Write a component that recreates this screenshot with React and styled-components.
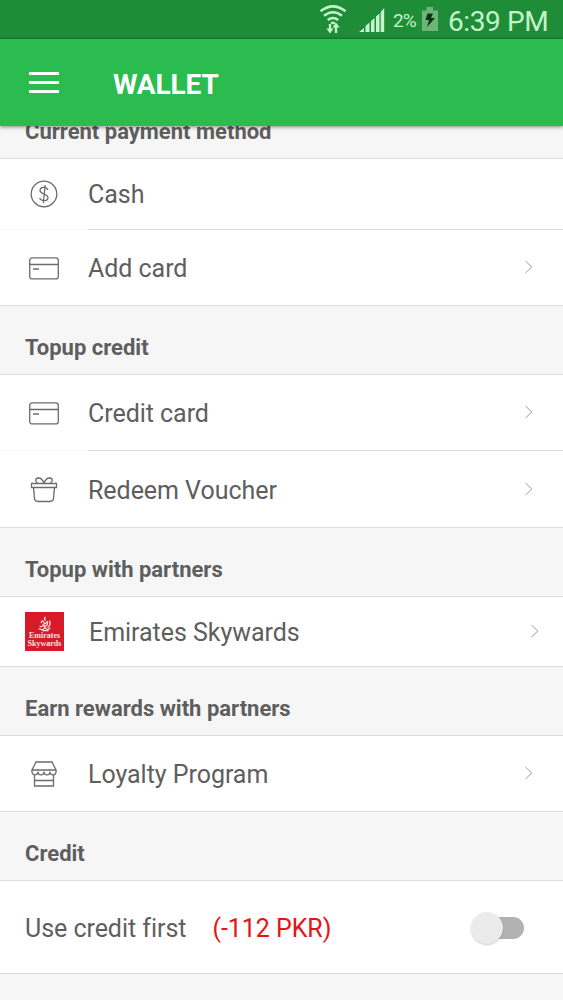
import React from "react";
import styled, { createGlobalStyle } from "styled-components";

const App = () => {
  return (
    <>
      <GlobalStyle />
      <Screen>
        <StatusBar>
          <WifiIcon />
          <SignalIcon />
          <Percent>2%</Percent>
          <BatteryIcon />
          <Clock>6:39 PM</Clock>
        </StatusBar>
        <AppBar>
          <MenuButton aria-label="Menu">
            <span />
            <span />
            <span />
          </MenuButton>
          <Title>WALLET</Title>
        </AppBar>
        <Content>
          <SectionTitle $scrolled>Current payment method</SectionTitle>
          <Item height={71} icon={<CashIcon />} label="Cash" inset />
          <Item height={76} icon={<CardIcon />} label="Add card" arrow />

          <SectionTitle>Topup credit</SectionTitle>
          <Item height={76} icon={<CardIcon />} label="Credit card" arrow inset />
          <Item height={77} icon={<GiftIcon />} label="Redeem Voucher" arrow />

          <SectionTitle>Topup with partners</SectionTitle>
          <Item height={70} icon={<EmiratesLogo />} label="Emirates Skywards" arrow partner />

          <SectionTitle>Earn rewards with partners</SectionTitle>
          <Item height={76} icon={<StoreIcon />} label="Loyalty Program" arrow />

          <SectionTitle>Credit</SectionTitle>
          <CreditRow>
            <Text>Use credit first</Text>
            <Amount>(-112 PKR)</Amount>
            <Switch role="switch" aria-checked="false">
              <Thumb />
            </Switch>
          </CreditRow>
        </Content>
      </Screen>
    </>
  );
};

const Item = ({ height, icon, label, arrow, inset, partner }) => (
  <Row $height={height} $inset={inset}>
    <IconBox $partner={partner} $raised={partner || !arrow}>
      {icon}
    </IconBox>
    <Text $raised={!arrow}>{label}</Text>
    {arrow && (
      <Arrow $partner={partner} viewBox="0 0 10 16">
        <path d="M1.500 2 7.800 8l-6.300 6" />
      </Arrow>
    )}
  </Row>
);

const WifiIcon = () => (
  <svg width="28" height="30" viewBox="0 0 28 30" fill="none" stroke="#c5f3ca" strokeWidth="2.500">
    <path d="M1.500 6.300Q14-3.500 26.500 6.300M5 10.700q9-7 18 0M8.700 15q5.300-4 10.600 0" />
    <path d="M11 19v7M17 28v-7" strokeWidth="2.300" />
    <path d="M7.300 23.500h7.200L11 28.500zM13.500 22.500h7.200L17 17.500z" fill="#c5f3ca" stroke="none" />
    <path d="M11 18q3-3 6 0l-3 1.500z" fill="#c5f3ca" stroke="none" />
  </svg>
);

const SignalIcon = () => (
  <svg width="26" height="26" viewBox="0 0 26 26" fill="#c5f3ca">
    <path d="M0 25 5 21v4zM6.500 19l4-3.500V25h-4zM12 14l3.500-3v14H12zM17 9.500l3.500-3V25H17zM21.700 5l3.500-4v24h-3.500z" />
  </svg>
);

const BatteryIcon = () => (
  <svg width="16" height="25" viewBox="0 0 16 25">
    <path d="M0 3.500h4.500V0h6.500v3.500h5V24H0z" fill="#6db677" />
    <path d="M5.500 6.500H11l-2 4.500h4L5 20l2-7H3.500z" fill="#083510" />
  </svg>
);

const CashIcon = () => (
  <LineIcon width="28" height="28" viewBox="0 0 28 28">
    <circle cx="14" cy="14" r="12.800" />
    <path d="M18 10C16.500 6.500 10 6.500 10 10.500c0 4 8 3 8 7 0 4-6.500 4-8.500.5M15.200 5l-1.900 18" />
  </LineIcon>
);

const CardIcon = () => (
  <LineIcon width="30" height="23" viewBox="0 0 30 23">
    <rect x=".7" y=".9" width="28.600" height="21" rx="2.500" />
    <path d="M1 7.500h28M4 12h6" />
  </LineIcon>
);

const GiftIcon = () => (
  <LineIcon width="28" height="26" viewBox="0 0 28 26">
    <path d="M1.500 6.500h25v4h-25zM3.500 10.500l1 11q.3 3 3.500 3h12q3.200 0 3.500-3l1-11" />
    <path d="M14 6.500C12.500 2 10 .8 8 1 5 1.300 5 5 8 6.500M14 6.500C15.500 2 18 .8 20 1c3 .3 3 4 0 5.500" />
  </LineIcon>
);

const StoreIcon = () => (
  <LineIcon width="26" height="26" viewBox="0 0 26 26">
    <path d="M5 1h16l4 8H1zM1 9v1.500c0 4.500 6 4.500 6 0 0 4.500 6 4.500 6 0 0 4.500 6 4.500 6 0 0 4.500 6 4.500 6 0V9M3.500 13.500V25h19V13.500M3.500 19.500h19" />
  </LineIcon>
);

const EmiratesLogo = () => (
  <Logo>
    <svg width="16" height="16" viewBox="0 0 16 18" fill="none" stroke="#fbdadd" strokeWidth="1.400">
      <path d="M8.500 1q-2 2 0 4M3.500 8q1.500-5 3-1t4-1.500M2 11q2 3 4-1.500M7 7v5q4 0 4-6M13 5q2 5-2 8M1 14q5 3 7-1 2 4 6 .5M5 16.500h7" />
    </svg>
    <b>Emirates</b>
    <b>Skywards</b>
  </Logo>
);

const GlobalStyle = createGlobalStyle`
  * {
    box-sizing: border-box;
  }
  body {
    margin: 0;
    font-family: Roboto, sans-serif;
    color: #5e5e5e;
  }
`;

const Screen = styled.div`
  width: 563px;
  height: 1000px;
  display: flex;
  flex-direction: column;
  overflow: hidden;
  background: #f6f6f6;
`;

const StatusBar = styled.div`
  height: 39px;
  flex: none;
  display: flex;
  align-items: flex-start;
  padding: 5px 0 0 319px;
  background: #1f8d38;
  border-bottom: 1px solid #1b7e31;
  color: #c5f3ca;

  svg {
    flex: none;
  }
  svg:nth-of-type(2) {
    margin: 2px 0 0 12px;
  }
  svg:nth-of-type(3) {
    margin: 2px 0 0 4px;
  }
`;

const Percent = styled.span`
  width: 25px;
  margin: 4px 0 0 8px;
  font-size: 19px;
  line-height: 24px;
  letter-spacing: -1px;
`;

const Clock = styled.span`
  margin-left: 10px;
  font-size: 28px;
  line-height: 34px;
  letter-spacing: -0.400px;
  white-space: nowrap;
`;

const AppBar = styled.header`
  height: 87px;
  flex: none;
  display: flex;
  align-items: center;
  padding-left: 29px;
  background: #2abc4e;
  box-shadow: 0 1px 4px rgba(0, 0, 0, 0.450);
  z-index: 1;
`;

const MenuButton = styled.button`
  width: 30px;
  display: flex;
  flex-direction: column;
  gap: 6px;
  padding: 0;
  border: 0;
  background: none;

  span {
    height: 3px;
    background: #fff;
  }
`;

const Title = styled.h1`
  margin: 4px 0 0 54px;
  font-size: 28px;
  font-weight: 700;
  line-height: 34px;
  letter-spacing: -0.100px;
  color: #fff;
`;

const Content = styled.main`
  flex: 1;
`;

const SectionTitle = styled.h2`
  height: ${({ $scrolled }) => ($scrolled ? 33 : 69)}px;
  display: flex;
  align-items: flex-end;
  margin: 0;
  padding: 0 25px 13px;
  border-bottom: 1px solid #dcdcdc;
  font-size: 22px;
  font-weight: 700;
  line-height: 26px;
  white-space: nowrap;
`;

const Row = styled.div`
  height: ${({ $height }) => $height}px;
  display: flex;
  align-items: center;
  padding-left: 25px;
  background: ${({ $inset }) =>
    $inset
      ? "linear-gradient(to right, #f5f5f5 88px, #dcdcdc 88px) bottom / 100% 1px no-repeat #fff"
      : "linear-gradient(#dcdcdc, #dcdcdc) bottom / 100% 1px no-repeat #fff"};
`;

const IconBox = styled.div`
  width: ${({ $partner }) => ($partner ? 64 : 63)}px;
  flex: none;
  display: flex;
  padding-right: ${({ $partner }) => ($partner ? 25 : 26)}px;
  padding-bottom: ${({ $raised }) => ($raised ? 2 : 0)}px;
  justify-content: center;
`;

const LineIcon = styled.svg`
  flex: none;
  fill: none;
  stroke: #6b6b6b;
  stroke-width: 1.300;
`;

const Text = styled.span`
  padding-top: ${({ $raised }) => ($raised ? 0 : 2)}px;
  font-size: 25px;
  line-height: 32px;
  letter-spacing: -0.040px;
  white-space: nowrap;
`;

const Arrow = styled.svg`
  width: 10px;
  height: 16px;
  margin: 0 ${({ $partner }) => ($partner ? 23 : 29)}px 2px auto;
  fill: none;
  stroke: #9a9a9a;
  stroke-width: 1;
`;

const Logo = styled.div`
  width: 39px;
  height: 39px;
  flex: none;
  display: flex;
  flex-direction: column;
  align-items: center;
  padding-top: 4px;
  background: #d71a28;
  color: #fbe4e6;

  b {
    font: 700 8px/8px "Liberation Serif", serif;
  }
`;

const CreditRow = styled.div`
  height: 93px;
  display: flex;
  align-items: center;
  padding: 2px 39px 0 25px;
  background: #fff;
  border-bottom: 1px solid #dcdcdc;
`;

const Amount = styled(Text)`
  margin-left: 26px;
  color: #e51515;
`;

const Switch = styled.div`
  width: 49px;
  height: 22px;
  display: flex;
  align-items: center;
  margin: 0 0 1px auto;
  border-radius: 11px;
  background: #b2b2b2;
`;

const Thumb = styled.div`
  width: 32px;
  height: 32px;
  flex: none;
  margin-left: -4px;
  border-radius: 50%;
  background: #ebebeb;
  box-shadow: 0 1px 2px rgba(0, 0, 0, 0.200);
`;

export default App;
